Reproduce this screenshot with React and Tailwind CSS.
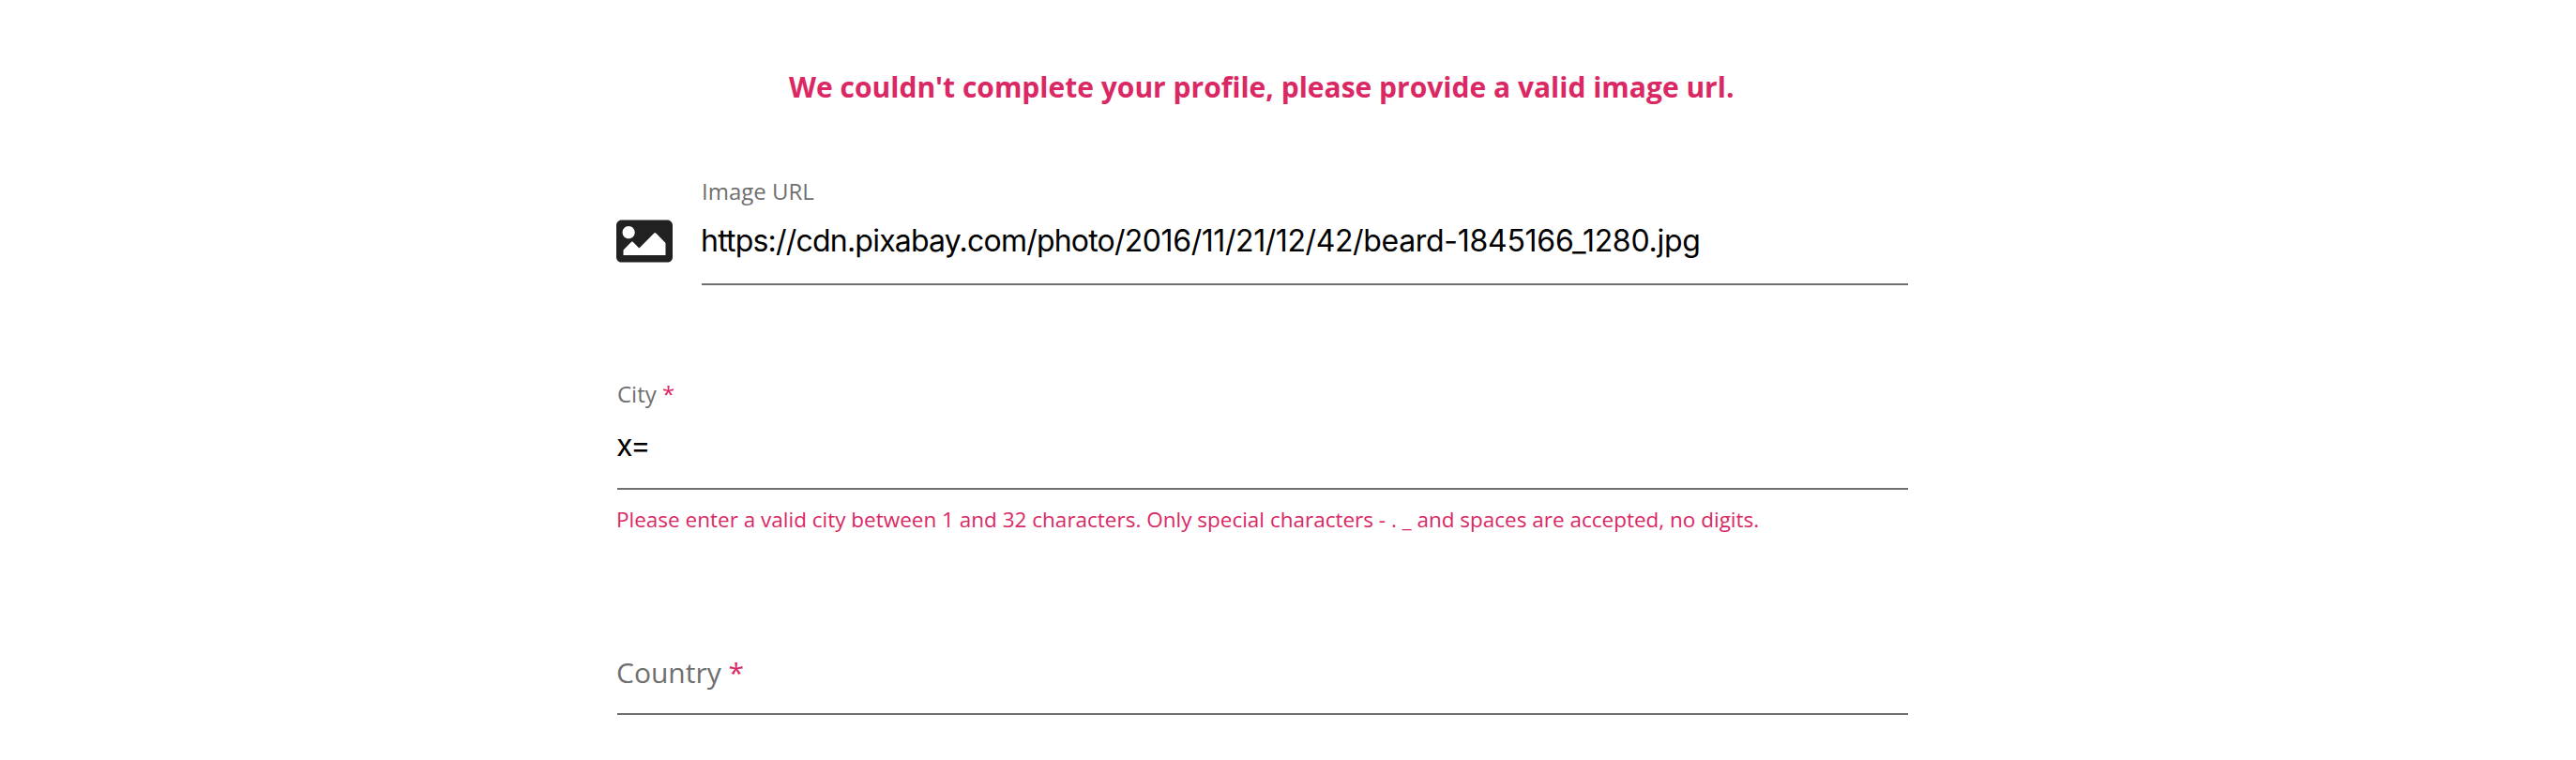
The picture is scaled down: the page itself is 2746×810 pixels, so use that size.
import { FaImage } from 'react-icons/fa';

export default function App() {
  return (
    <main className="flex h-[810px] flex-col bg-white pt-[73px] font-['Open_Sans',sans-serif]">
      <p className="pl-[841px] text-[30px] font-bold leading-[40px] whitespace-nowrap text-[#da2864]">We couldn't complete your profile, please provide a valid image url.</p>
      <form className="ml-[657px] w-[1377px]">
        <div className="mt-[75px] flex h-[116px] gap-[31px]">
          <FaImage className="mt-[39px] size-[60px] shrink-0 text-[#212121]" />
          <div className="flex-1 border-b-2 border-[#6f6f6f]">
            <div className="text-[24px] leading-[32px] text-[#6f6f6f]">Image URL</div>
            <div className="-ml-px mt-[17px] font-['Inter',sans-serif] text-[32px] leading-[40px] whitespace-nowrap text-black"><span className="tracking-[-0.79px]">https://cdn.pixabay.com/photo/</span><span className="tracking-[-0.42px]">2016/11/21/12/42/</span><span className="tracking-[-0.28px]">beard-1845166_1280.jpg</span></div>
          </div>
        </div>
        <div className="mt-[100px] ml-px h-[118px] border-b-2 border-[#6f6f6f]">
          <div className="text-[24px] leading-[32px] text-[#6f6f6f]">City <span className="text-[#da2864]">*</span></div>
          <div className="-ml-px mt-[19px] font-['Inter',sans-serif] text-[32px] leading-[40px] tracking-[-1.2px] text-black">x=</div>
        </div>
        <p className="mt-[16px] text-[22.5px] leading-[32px] text-[#da2864]">Please enter a valid city between 1 and 32 characters. Only special characters - . _ and spaces are accepted, no digits.</p>
        <div className="mt-[128px] h-[64px] pl-px">
          <div className="h-[64px] border-b-2 border-[#6f6f6f] text-[30px] leading-[38px] text-[#6f6f6f]"><span className="-ml-px">Country</span> <span className="text-[#da2864]">*</span></div>
        </div>
      </form>
    </main>
  );
}
